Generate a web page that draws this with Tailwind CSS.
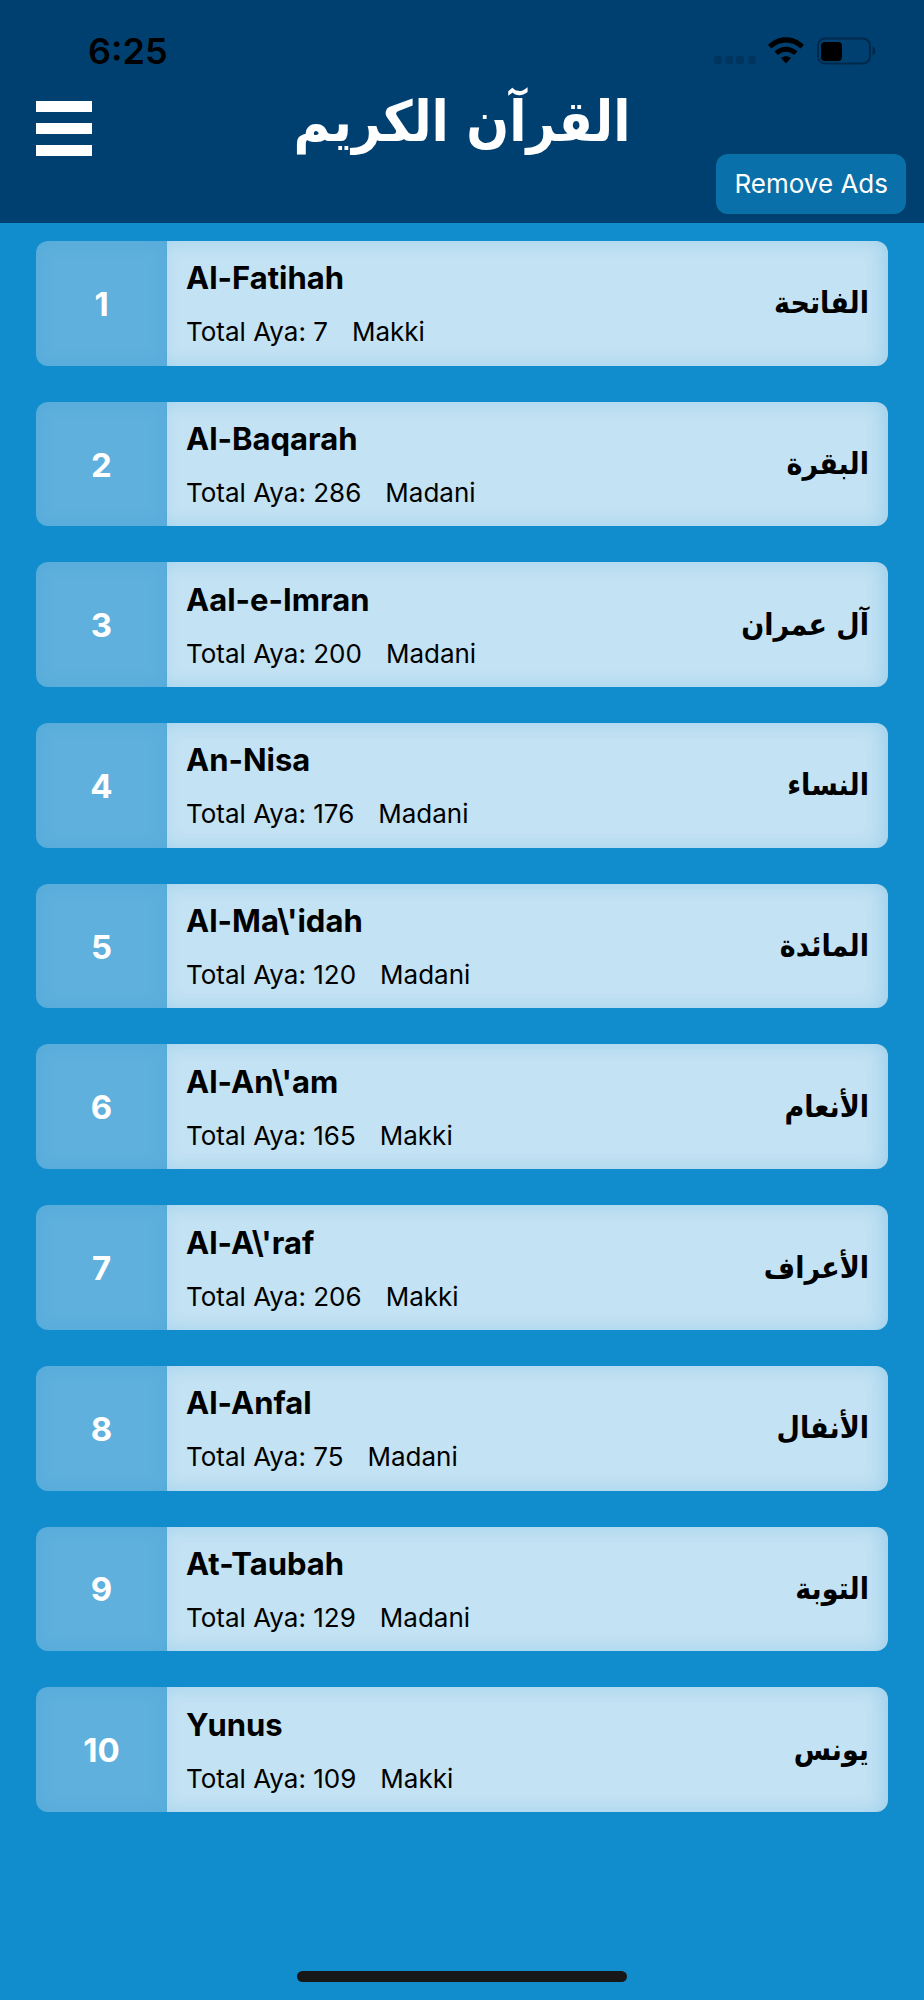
<!DOCTYPE html>
<html lang="en">
<head>
<meta charset="utf-8">
<meta name="viewport" content="width=device-width, initial-scale=1">
<title>القرآن الكريم</title>
<script src="https://cdn.jsdelivr.net/npm/@tailwindcss/browser@4"></script>
</head>
<body class="flex min-h-screen flex-col bg-[#118dcd] font-['Inter','DejaVu_Sans',sans-serif] text-black">
  <header class="bg-[#004070] pb-[9px]">
    <div class="flex h-[84px] items-center justify-between pt-[17px] pr-12 pl-[88px]">
      <time class="text-[36px] leading-10 font-semibold">6:25</time>
      <div class="flex items-center gap-3">
        <svg class="mt-[18px] h-2 w-[42px]" viewBox="0 0 42 8" fill="#003560" aria-label="No signal"><rect x="0" width="8" height="8" rx="2.5"/><rect x="11" width="8" height="8" rx="2.5"/><rect x="22" width="8" height="8" rx="2.5"/><rect x="34" width="8" height="8" rx="2.5"/></svg>
        <svg class="h-[27px] w-9" viewBox="0 0 36 27" aria-label="Wi-Fi"><path d="M0 8C10-2.500 26-2.500 36 8L32.500 11.500C24.500 3.500 11.500 3.500 3.500 11.500Z"/><path d="M6.500 14.500C13 8 23 8 29.500 14.500L26 18C21 13.500 15 13.500 10 18Z"/><path d="M13 21C16 18.500 20 18.500 23 21L18 26.500Z"/></svg>
        <svg class="h-7 w-[60px]" viewBox="0 0 60 28" aria-label="Battery"><rect x="2" y="1.500" width="52" height="25" rx="7" fill="none" stroke="#00294b" stroke-width="2"/><rect x="5" y="5" width="21" height="19" rx="4"/><path d="M56.500 9.500C60.500 12 60.500 16 56.500 18.500Z" fill="#00294b"/></svg>
      </div>
    </div>
    <div class="grid min-h-[130px] grid-cols-[1fr_auto_1fr] px-[18px]">
      <button type="button" aria-label="Menu" class="ml-[18px] mt-[17px] h-14 w-14 justify-self-start">
        <svg class="h-14 w-14" viewBox="0 0 56 56" fill="#fff"><rect width="56" height="11"/><rect y="22" width="56" height="11"/><rect y="44" width="56" height="11"/></svg>
      </button>
      <h1 lang="ar" dir="rtl" class="font-['DejaVu_Sans_Condensed','DejaVu_Sans',sans-serif] text-[56px] leading-[76px] font-bold text-white">القرآن الكريم</h1>
      <button type="button" class="h-[60px] self-end justify-self-end rounded-xl bg-[#0a70a9] px-[18px] text-[26px] leading-8 text-white">Remove Ads</button>
    </div>
  </header>
  <main class="flex flex-1 flex-col px-9 pt-[18px]">
    <ol id="surahs" class="grid flex-1 auto-rows-fr gap-9"></ol>
  </main>
  <footer class="flex h-[188px] items-end justify-center pb-[18px]">
    <div class="h-[11px] w-[330px] rounded-full bg-[#171717]"></div>
  </footer>
  <template id="row">
    <li>
      <a href="#" class="flex h-full min-h-[120px] overflow-hidden rounded-xl">
        <span data-f="n" class="flex w-[131px] shrink-0 items-center justify-center bg-[#5fb0dc] pt-px text-[33px] leading-10 font-bold text-white inset-shadow-[0_0_18px_#118dcd26]"></span>
        <span class="flex flex-1 items-center justify-between bg-[#c3e2f3] px-[19px] inset-shadow-[-6px_0_18px_#118dcd33]">
          <span class="flex flex-col gap-5 pt-0.5">
            <strong data-f="name" class="text-[31px] leading-9 font-bold"></strong>
            <span class="flex gap-6 text-[26px] leading-8"><span data-f="total"></span><span data-f="place"></span></span>
          </span>
          <span data-f="ar" lang="ar" dir="rtl" class="font-['DejaVu_Sans_Condensed','DejaVu_Sans',sans-serif] text-[30px] leading-10 font-bold"></span>
        </span>
      </a>
    </li>
  </template>
  <script>
    const surahs = [
      ["Al-Fatihah", 7, "Makki", "الفاتحة"],
      ["Al-Baqarah", 286, "Madani", "البقرة"],
      ["Aal-e-Imran", 200, "Madani", "آل عمران"],
      ["An-Nisa", 176, "Madani", "النساء"],
      ["Al-Ma\\'idah", 120, "Madani", "المائدة"],
      ["Al-An\\'am", 165, "Makki", "الأنعام"],
      ["Al-A\\'raf", 206, "Makki", "الأعراف"],
      ["Al-Anfal", 75, "Madani", "الأنفال"],
      ["At-Taubah", 129, "Madani", "التوبة"],
      ["Yunus", 109, "Makki", "يونس"],
    ];
    const list = document.getElementById("surahs");
    const row = document.getElementById("row");
    surahs.forEach(([name, total, place, ar], i) => {
      const item = row.content.cloneNode(true);
      const fields = { n: i + 1, name, total: "Total Aya: " + total, place, ar };
      for (const key in fields) item.querySelector(`[data-f="${key}"]`).textContent = fields[key];
      list.append(item);
    });
  </script>
</body>
</html>
